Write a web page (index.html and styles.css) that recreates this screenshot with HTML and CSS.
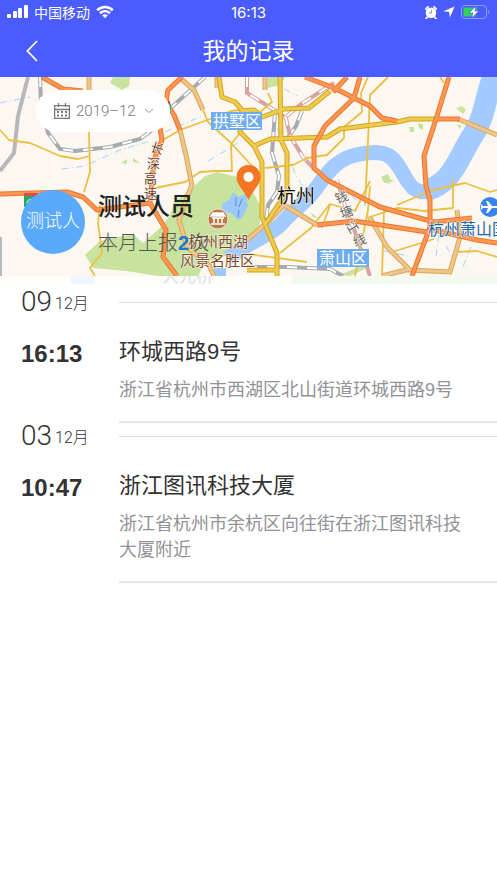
FILE: index.html
```html
<!DOCTYPE html>
<html lang="zh-CN">

<head>
    <meta charset="UTF-8">
    <meta name="viewport" content="width=device-width, initial-scale=1.0">
    <title>我的记录</title>
    <link rel="stylesheet" href="styles.css">
</head>

<body>
    <header class="topbar">
        <div class="status">
            <div class="status-left">
                <svg width="21" height="14" viewBox="0 0 21 14" fill="#fff">
                    <rect x="0" y="9" width="4" height="4" rx="1" />
                    <rect x="6" y="6" width="4" height="7" rx="1" />
                    <rect x="11" y="3" width="4" height="10" rx="1" />
                    <rect x="17" y="0" width="4" height="13" rx="1" />
                </svg>
                <span>中国移动</span>
                <svg width="18" height="14" viewBox="0 0 18 14">
                    <path d="M1.2 5.2C5.6 1 12.4 1 16.8 5.2M4 8.3c2.9-2.7 7.1-2.7 10 0" fill="none" stroke="#fff" stroke-width="2.6" />
                    <path d="M6.2 10.3c1.6-1.5 4-1.5 5.6 0L9 13.2z" fill="#fff" />
                </svg>
            </div>
            <span class="clock">16:13</span>
            <div class="status-right">
                <svg width="12" height="13" viewBox="0 0 12 13">
                    <path d="M.8 3 3 .9M11.2 3 9 .9M2.4 11 1 12.6M9.6 11l1.4 1.6" fill="none" stroke="#fff" stroke-width="1.8" stroke-linecap="round" />
                    <circle cx="6" cy="6.7" r="5.3" fill="#fff" />
                    <path d="M6.4 4v3H3.8" fill="none" stroke="#4a5bff" stroke-width=".7" />
                </svg>
                <svg width="12" height="12" viewBox="0 0 12 12">
                    <path d="M11.6.4 6.9 11.4 6.2 6 .4 5.3z" fill="#fff" />
                </svg>
                <svg width="29" height="14" viewBox="0 0 29 14">
                    <rect x=".5" y=".5" width="25" height="13" rx="3.5" fill="none" stroke="#8f9aff" />
                    <path d="M27.3 4.8c1.6.8 1.6 3.6 0 4.4z" fill="#8f9aff" />
                    <path d="M4 2.500h12.500l-2 9H4q-1.500 0-1.500-1.500V4q0-1.500 1.500-1.500z" fill="#35cf5b" />
                    <path d="M15 1 8 8h4l-1.800 5.200L18 6h-4.200z" fill="#fff" stroke="#4a5bff" stroke-width=".7" />
                </svg>
            </div>
        </div>
        <nav class="nav">
            <button class="back-btn" type="button" aria-label="返回">
                <svg width="12" height="22" viewBox="0 0 12 22">
                    <path d="M11 1 1.400 11 11 21" fill="none" stroke="#fff" stroke-width="1.8" />
                </svg>
            </button>
            <h1>我的记录</h1>
        </nav>
    </header>

    <main>
        <section class="hero">
            <!-- Mapa -->
            <svg class="map" viewBox="0 77 497 199" preserveAspectRatio="xMidYMid slice">
                <rect x="-500" y="77" width="1500" height="199" fill="#fcf8f1" />
                <!-- áreas verdes -->
                <g fill="#c7e39d">
                    <path d="M85 255 100 241 118 237 133 234 143 243 160 228 170 216 174 202 193 187 205 176 217 172 241 178 252 190 260 205 260 226 232 254 205 263 198 276 158 276 127 271 93 268z" />
                    <path d="M113 77h17l-1 9-7 4-12-7zM268 77h17l-4 8-14 3z" />
                    <path d="M121 163l6-4v5zM133 158l7 5-7-1zM456 108l6-2 4 4-3 4zM381 177l7-3 4 8-8 1zM399 162l10 8-3-1zM409 127h5v5h-4zM418 123l5 1v6l-4-2zM310 212l8 6-5-1zM340 275l25-11v5l-15 7zM387 180h7l-6 4zM457 125h5l-2 4z" />
                </g>
                <!-- rio e lago -->
                <g fill="none" stroke="#a3cbff">
                    <path d="M228 258C256 238 273 234 283 222S303 205 314 191 333 159 360 154 393 155 405 177 426 191 441 187" stroke-width="15" />
                    <path d="M425 190C452 186 460 154 473 135S484 97 496 70" stroke-width="22" />
                </g>
                <path d="M222 204l8-5 3-7 5 5 8-3 2 12-6 12-4 2-7-7-8-1zM214 268h12v8h-12z" fill="#9cc9fa" />
                <path d="M236 197v9M242 199l-3 8M239 210l-1 7" stroke="#568dcc" fill="none" />
                <!-- riachos -->
                <g fill="none" stroke="#a9d1fa" stroke-width="1" stroke-dasharray="7 3 1 3">
                    <path d="M0 103 30 97M62 169 85 166 120 150 150 141M165 132 202 116M117 93l22 8M277 128l19 48 14 20M384 251l25 5M436 256l3-22M446 246l8 14M471 247l-8 20M284 89l14 7M340 189l26 17M208 161l22-13 15-10" />
                </g>
                <!-- ferrovias -->
                <g fill="none">
                    <path d="M28 77 18 116 14 153 0 171M0 237v39" stroke="#b8b8ba" stroke-width="4" />
                    <path d="M40 77 41 104 48 133 60 149 75 151 110 147 140 139 155 128 173 106 205 77M275 112 272 153 279 176 277 192 268 205 266 222M302 111 296 126 287 139M247 267H287L330 269 343 276" stroke="#a5abb0" stroke-width="4" />
                    <path d="M40 77 41 104 48 133 60 149 75 151 110 147 140 139 155 128 173 106 205 77M275 112 272 153 279 176 277 192 268 205 266 222M302 111 296 126 287 139M247 267H287L330 269 343 276" stroke="#fff" stroke-width="2" stroke-dasharray="10 10" />
                    <path d="M247 77V93L268 106 286 118 290 136 303 157 317 172M337 180 347 212 355 232 370 276M287 116l14-12 33-21" stroke="#d9a3a3" stroke-width="4" />
                    <path d="M247 77V93L268 106 286 118 290 136 303 157 317 172M337 180 347 212 355 232M287 116l14-12 33-21" stroke="#fff" stroke-width="2" stroke-dasharray="10 10" />
                </g>
                <!-- ruas -->
                <g fill="none" stroke="#eac044" stroke-width="1.8" stroke-linejoin="round">
                    <path d="M0 130 9 140 30 143 60 156 78 159 90 156M89 132 90 172 84 192M100 205 98 223 102 253 90 268 95 276" />
                    <path d="M163 140 180 130 213 118 231 111 250 109M203 110l5 12 23 21 1 28-17 0-15 1-15 10-30 6M232 143l12-15M231 143l22 24" />
                    <path d="M368 77l-7 16 1 19-18 15v11l-17 17-20 3-14 7-28 3M388 77l-18 18-4 91-1 18" />
                    <path d="M280 253l31-25 19-24 25 7 15-30M370 186l-2 24-13 66M384 210l-2 66M367 218l30-10 28 3 28-3 0-28M392 252l42-13M397 205l36-15 32-7 25 9 7-2M455 252l22-1 20 6M247 254l60 8M330 205l-8 23M440 77l4 6M268 93l4 9-12 10" />
                </g>
                <!-- avenidas -->
                <g fill="none" stroke="#dfa552" stroke-width="5">
                    <path d="M179 77 194 90 203 110M89 77V91M180 130 186 155 192 186M192 184 179 220 187 247 209 265 214 276M247 240 270 220 284 205 317 225M370 218 387 247 410 270 450 272 460 237 457 210M382 276 410 269M458 119 497 135M265 77V90M217 77V88" />
                    <path d="M179 77 194 90 203 110M89 77V91M180 130 186 155 192 186M192 184 179 220 187 247 209 265 214 276M247 240 270 220 284 205 317 225M370 218 387 247 410 270 450 272 460 237 457 210M382 276 410 269M458 119 497 135M265 77V90M217 77V88" stroke="#edc68d" stroke-width="3" />
                </g>
                <g fill="none" stroke-linejoin="round">
                    <path d="M219 77 222 97 235 102 242 110 240 132 254 146 262 162V217L277 253V276M242 111 254 110 262 117 284 109 309 108 330 91M280 77 281 140 287 153V192L264 226M254 146 270 139 327 137 340 129 397 122 410 119H439M247 270H277" stroke="#d3a41b" stroke-width="5" />
                    <path d="M219 77 222 97 235 102 242 110 240 132 254 146 262 162V217L277 253V276M242 111 254 110 262 117 284 109 309 108 330 91M280 77 281 140 287 153V192L264 226M254 146 270 139 327 137 340 129 397 122 410 119H439M247 270H277" stroke="#edcb4e" stroke-width="3" />
                    <path d="M42 77 63 89 83 91M182 77 168 90 166 102 174 115 180 130M160 128 162 140 154 160 150 203M0 194 67 192 83 197 97 210 150 203 166 230 163 257 177 276M305 77 334 88 354 98 370 106 382 118 397 121M347 77 333 92M360 77 354 98 325 126 314 146V168L327 180 380 207 434 222 472 218M317 225 354 221 427 232M449 77 437 116 424 156 426 186 430 200V227L412 276M434 230 477 240 497 243M437 119H460" stroke="#eb772d" stroke-width="5" />
                    <path d="M42 77 63 89 83 91M182 77 168 90 166 102 174 115 180 130M160 128 162 140 154 160 150 203M0 194 67 192 83 197 97 210 150 203 166 230 163 257 177 276M305 77 334 88 354 98 370 106 382 118 397 121M347 77 333 92M360 77 354 98 325 126 314 146V168L327 180 380 207 434 222 472 218M317 225 354 221 427 232M449 77 437 116 424 156 426 186 430 200V227L412 276M434 230 477 240 497 243M437 119H460" stroke="#fc9652" stroke-width="3" />
                </g>
                <!-- placas -->
                <rect x="24" y="193" width="14" height="14" fill="#25aa64" />
                <rect x="24" y="193" width="14" height="3" fill="#e34747" />
                <path d="M33 200c-5-3-8 4-4 5l4-1v-2h-3" fill="none" stroke="#fff" />
                <path d="M168 101l1 3" stroke="#e42b2b" stroke-width="3" />
                <path d="M170 104v9" stroke="#32bd90" stroke-width="2" />
                <rect x="211" y="112" width="51" height="18" fill="#6dacee" />
                <rect x="317" y="249" width="52" height="18" fill="#6dacee" />
                <g class="map-labels">
                    <text class="district" x="213" y="127">拱墅区</text>
                    <text class="district" x="319" y="264">萧山区</text>
                    <text class="place" x="188" y="247">杭州西湖</text>
                    <text class="place" x="180" y="266">风景名胜区</text>
                    <text class="airport" x="428" y="235">杭州萧山国际机场</text>
                    <text class="city" x="277" y="203">杭州</text>
                    <text class="road" x="151" y="153" transform="rotate(18 157 147)">长</text>
                    <text class="road" x="147" y="168">深</text>
                    <text class="road" x="144" y="183">高</text>
                    <text class="road" x="144" y="198">速</text>
                    <text class="road gray" x="335" y="202" transform="rotate(-20 341 197)">钱</text>
                    <text class="road gray" x="340" y="217" transform="rotate(-20 346 212)">塘</text>
                    <text class="road gray" x="346" y="231" transform="rotate(60 352 226)">江</text>
                    <text class="road gray" x="353" y="245" transform="rotate(-20 359 240)">线</text>
                </g>
                <circle cx="218" cy="219" r="10" fill="#b87a48" stroke="#f2dfcb" stroke-width="1" />
                <path d="M211 216l2-3h10l2 3zM212 218h12M214 218v5M218 218v5M222 218v5M211 224h14" fill="#fff" stroke="#fff" stroke-width="1.5" />
                <circle cx="490" cy="207" r="10" fill="#3984eb" />
                <path d="M483 206h5l-2-5h2l4 5h4c2 0 2 2 0 2h-4l-4 5h-2l2-5h-5l-2 2v-6z" fill="#fff" />
                <!-- marcador -->
                <path d="M248.500 165c-7 0-12 5-12 12 0 8 7 12 12 23 5-11 12-15 12-23 0-7-5-12-12-12z" fill="#f47622" />
                <circle cx="248.500" cy="177" r="5" fill="#fff" />
            </svg>

            <button class="month-btn" type="button">
                <svg width="16" height="16" viewBox="0 0 16 16" fill="none" stroke="#777">
                    <path d="M.6 2.6h14.800v12.800H.6zM.6 6.500h14.800M4.500 0v4M11.500 0v4" stroke-width="1.3" />
                    <path d="M3 9h2M7 9h2M11 9h2M3 12.500h2M7 12.500h2M11 12.500h2" stroke-width="1.8" />
                </svg>
                <span>2019–12</span>
                <svg width="10" height="6" viewBox="0 0 10 6">
                    <path d="M1 1l4 3.500L9 1" fill="none" stroke="#999" />
                </svg>
            </button>

            <div class="profile">
                <div class="avatar">测试人</div>
                <div class="profile-info">
                    <h2>测试人员</h2>
                    <p>本月上报<strong>2</strong>次</p>
                </div>
            </div>
        </section>

        <div class="map-fade">
            <span class="fade-water"></span>
            <span class="fade-text">大元桥</span>
            <span class="fade-green"></span>
        </div>

        <section class="records">
            <div class="day">
                <div class="day-head">
                    <h3><span class="day-num">09</span>12月</h3>
                    <hr>
                </div>
                <div class="record">
                    <time>16:13</time>
                    <div class="record-body">
                        <h4>环城西路9号</h4>
                        <p>浙江省杭州市西湖区北山街道环城西路9号</p>
                    </div>
                </div>
            </div>

            <div class="day">
                <div class="day-head">
                    <h3><span class="day-num">03</span>12月</h3>
                    <hr>
                </div>
                <div class="record">
                    <time>10:47</time>
                    <div class="record-body">
                        <h4>浙江图讯科技大厦</h4>
                        <p>浙江省杭州市余杭区向往街在浙江图讯科技大厦附近</p>
                    </div>
                </div>
            </div>
        </section>
    </main>
</body>

</html>
```
FILE: styles.css
```css
/* Reset e estilos globais */
* {
    margin: 0;
    padding: 0;
    box-sizing: border-box;
}

body {
    font-family: 'Liberation Sans', 'Noto Sans CJK SC', sans-serif;
    background: #fff;
    color: #333;
}

svg {
    display: block;
    flex-shrink: 0;
}

button {
    border: none;
    background: none;
    font-family: inherit;
    cursor: pointer;
}

/* Topo */
.topbar {
    background: #4a5bff;
    color: #fff;
}

.status {
    display: grid;
    grid-template-columns: 1fr auto 1fr;
    align-items: center;
    height: 24px;
    padding: 0 7px;
    font-size: 14px;
}

.status-left,
.status-right {
    display: flex;
    align-items: center;
    gap: 6px;
}

.status-right {
    justify-content: flex-end;
}

.clock {
    font-family: Inter, sans-serif;
    font-size: 15px;
}

.nav {
    display: grid;
    grid-template-columns: 44px 1fr 44px;
    align-items: center;
    height: 53px;
}

.back-btn {
    display: flex;
    justify-content: flex-end;
    padding: 6px;
}

.nav h1 {
    font-size: 23px;
    font-weight: 400;
    line-height: 32px;
    text-align: center;
}

/* Mapa e perfil */
.hero {
    position: relative;
    height: 199px;
    padding: 13px 21px 0;
    overflow: hidden;
}

.map {
    position: absolute;
    left: 0;
    top: 0;
    width: 100%;
    height: 100%;
}

.map-labels {
    font-family: 'Noto Sans CJK SC', sans-serif;
    paint-order: stroke;
    stroke: #fcf8f1;
    stroke-width: 1px;
}

.district {
    font-size: 16px;
    fill: #fff;
    stroke: none;
}

.place {
    font-size: 15px;
    fill: #7b4b2c;
}

.airport {
    font-size: 16px;
    fill: #2467a8;
}

.city {
    font-size: 19px;
    fill: #111;
}

.road {
    font-size: 13px;
    fill: #6b4330;
}

.road.gray {
    fill: #666;
}

.month-btn {
    position: relative;
    display: flex;
    align-items: center;
    gap: 6px;
    height: 42px;
    margin-left: 15px;
    padding: 0 16px 0 18px;
    border-radius: 21px;
    background: #fff;
    color: #777;
    font: 300 15px Roboto, sans-serif;
}

.month-btn span {
    margin-right: 2px;
}

.profile {
    position: relative;
    display: flex;
    align-items: flex-start;
    gap: 13px;
    margin-top: 58px;
}

.avatar {
    width: 64px;
    height: 64px;
    border-radius: 50%;
    background: #5aa9fa;
    color: #fff;
    font-size: 18px;
    font-weight: 300;
    line-height: 62px;
    text-align: center;
}

.profile-info h2 {
    font-size: 24px;
    font-weight: 500;
    line-height: 34px;
    color: #222;
}

.profile-info p {
    font-size: 20px;
    font-weight: 300;
    line-height: 38px;
    color: #555;
}

.profile-info strong {
    font-weight: bold;
    color: #1677d9;
}

/* Faixa translúcida abaixo do mapa */
.map-fade {
    display: flex;
    height: 8px;
    padding-left: 70px;
    overflow: hidden;
    background: #fffefb;
}

.fade-water {
    width: 24px;
    background: #eef5ff;
}

.fade-text {
    width: 198px;
    padding-left: 68px;
    font-size: 17px;
    font-weight: 500;
    line-height: 1px;
    color: #e0e3ea;
}

.fade-green {
    flex: 1;
    background: #f3f9ec;
}

/* Registros */
.records {
    padding: 5px 0 0 21px;
}

.day-head,
.record {
    display: grid;
    grid-template-columns: 98px 1fr;
}

.day-head {
    align-items: center;
    height: 26px;
}

.day-head h3 {
    display: flex;
    align-items: center;
    gap: 3px;
    font: 300 16px Roboto, 'Noto Sans CJK SC', sans-serif;
}

.day-num {
    font-size: 28px;
    line-height: 26px;
}

.day-head hr {
    border: none;
    border-top: 1px solid #ddd;
}

.record time {
    padding-top: 22px;
    font-size: 24px;
    font-weight: bold;
    line-height: 34px;
}

.record-body {
    padding: 22px 24px 18px 0;
    border-bottom: 2px solid #e6e6e6;
}

.record-body h4 {
    margin-bottom: 10px;
    font-size: 22px;
    font-weight: 400;
    line-height: 30px;
}

.record-body p {
    font-size: 18px;
    font-weight: 400;
    line-height: 26px;
    color: #929297;
}
```
